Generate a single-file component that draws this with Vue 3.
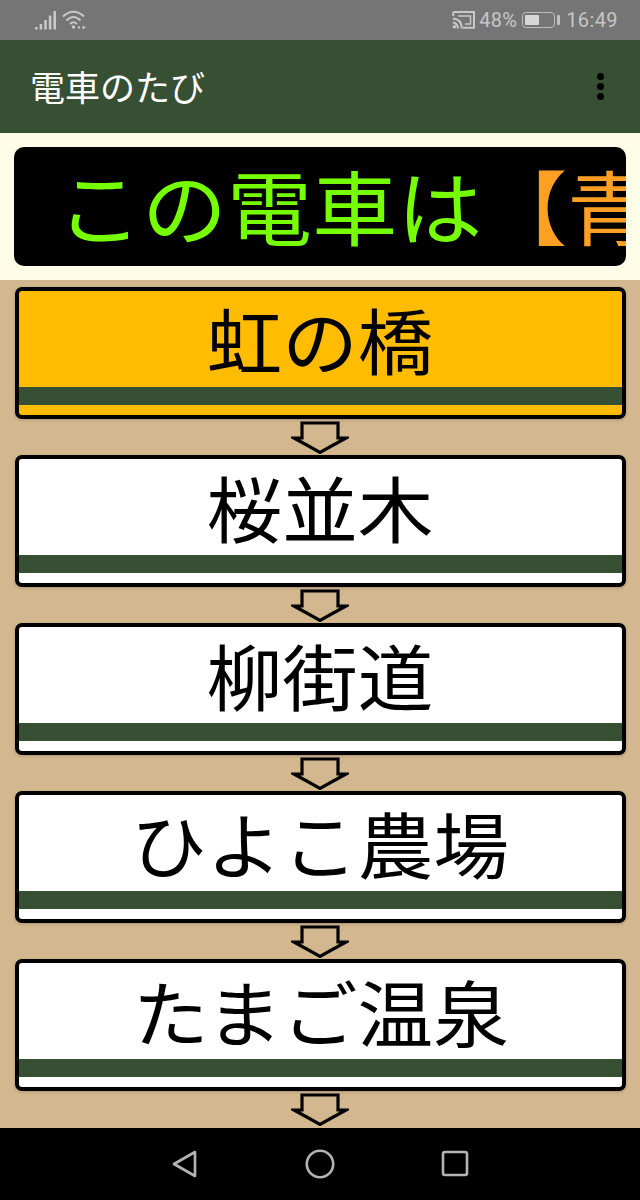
<script setup>
const stations = [
  { name: '虹の橋', current: true },
  { name: '桜並木' },
  { name: '柳街道' },
  { name: 'ひよこ農場' },
  { name: 'たまご温泉' }
]
</script>

<template>
  <div class="screen">
    <div class="status">
      <div class="status-left">
        <svg width="23" height="20" viewBox="0 0 23 20" class="sig">
          <rect x="1" y="17" width="2.6" height="2.5" />
          <rect x="5.6" y="14" width="2.6" height="5.5" />
          <rect x="10.2" y="10" width="2.6" height="9.5" />
          <rect x="14.8" y="5.5" width="2.6" height="14" />
          <rect x="19.4" y="1" width="2.6" height="18.5" />
        </svg>
        <svg width="25" height="20" viewBox="0 0 25 20" class="wifi">
          <path d="M1 6.5 Q11.5 -3 22 6.5" />
          <path d="M4.5 10.5 Q11.5 3.5 18.5 10.5" />
          <path d="M8 14 Q11.5 10.5 15 14" />
          <circle cx="11.5" cy="17" r="1.7" class="fill" />
          <circle cx="17" cy="17.5" r="1.2" class="fill" />
          <path d="M20.5 15.5 L24 17.5 L20.5 19.5 Z" class="fill" />
        </svg>
      </div>
      <div class="status-right">
        <svg width="23" height="18" viewBox="0 0 23 18" class="cast">
          <path d="M1.2 5 V2 Q1.2 1 2.5 1 H22 V16.8 H11" />
          <path d="M6 5 H18.5 V13 H13" class="thin" />
          <path d="M1 7.5 Q9.5 8 9.8 17.5" />
          <path d="M1 11.5 Q5.5 12 6 17.5" />
          <circle cx="2.4" cy="15.8" r="1.8" class="fill" />
        </svg>
        <span class="pct">48%</span>
        <div class="battery">
          <div class="battery-body"><div class="battery-fill"></div></div>
          <div class="battery-cap"></div>
        </div>
        <span class="time">16:49</span>
      </div>
    </div>

    <header class="appbar">
      <span class="title">電車のたび</span>
      <div class="menu"><i></i><i></i><i></i></div>
    </header>

    <section class="notice">
      <div class="board">
        <span class="board-text"><span class="green">この電車は</span><span class="orange">【青い空行き】</span></span>
      </div>
    </section>

    <main class="line">
      <template v-for="s in stations" :key="s.name">
        <div class="card" :class="{ current: s.current }">
          <div class="name"><span>{{ s.name }}</span></div>
          <div class="stripe"></div>
        </div>
        <svg class="arrow" width="58" height="34" viewBox="0 0 58 34">
          <path d="M11 2 H47 V17 H55 L29 31.5 L3 17 H11 Z" />
        </svg>
      </template>
    </main>

    <nav class="navbar">
      <svg width="28" height="30" viewBox="0 0 28 30">
        <path d="M24 3 V27 L3 15 Z" />
      </svg>
      <svg width="30" height="30" viewBox="0 0 30 30">
        <circle cx="15" cy="15" r="13.2" />
      </svg>
      <svg width="28" height="28" viewBox="0 0 28 28">
        <rect x="2" y="2" width="24" height="23" rx="2" />
      </svg>
    </nav>
  </div>
</template>

<style>
html, body { margin: 0; padding: 0; }
</style>

<style scoped>
.screen {
  width: 640px;
  height: 1200px;
  display: flex;
  flex-direction: column;
  overflow: hidden;
  font-family: "Noto Sans CJK JP", "Noto Sans", sans-serif;
}
.status {
  height: 40px;
  flex: none;
  background: #757575;
  display: flex;
  justify-content: space-between;
  align-items: center;
  padding: 0 22px 0 34px;
  color: #c6c6c6;
}
.status-left, .status-right { display: flex; align-items: center; }
.status-left { gap: 5px; }
.sig { fill: #c8c8c8; }
.wifi, .cast { fill: none; stroke: #c8c8c8; stroke-width: 2; }
.wifi .fill, .cast .fill { fill: #c8c8c8; stroke: none; }
.cast .thin { stroke-width: 1.5; }
.pct, .time {
  font-family: "Roboto", sans-serif;
  font-size: 20px;
  line-height: 40px;
}
.pct { margin-left: 4px; letter-spacing: .3px; }
.time { margin-left: 6.5px; letter-spacing: .4px; }
.battery { display: flex; align-items: center; margin-left: 5px; }
.battery-body {
  width: 33px;
  height: 16px;
  box-sizing: border-box;
  border: 1.5px solid #bdbdbd;
  border-radius: 4px;
  padding: 2px;
}
.battery-fill { width: 50%; height: 100%; background: #d6d6d6; border-radius: 1px; }
.battery-cap { width: 3px; height: 10px; background: #c0c0c0; margin-left: 1.5px; border-radius: 1px; }

.appbar {
  height: 93px;
  flex: none;
  background: #374f32;
  display: flex;
  justify-content: space-between;
  align-items: center;
  padding: 0 36px 0 30px;
}
.title {
  color: #fff;
  font-size: 35px;
  line-height: 1;
  margin-top: -2px;
}
.menu { display: flex; flex-direction: column; gap: 3px; margin-top: -1px; }
.menu i {
  display: block;
  width: 7px;
  height: 7px;
  border-radius: 50%;
  background: #000;
}

.notice {
  height: 147px;
  flex: none;
  background: #fffde7;
  box-sizing: border-box;
  padding: 14px;
}
.board {
  height: 119px;
  background: #000;
  border-radius: 10px;
  overflow: hidden;
  white-space: nowrap;
  display: flex;
  align-items: center;
  padding-left: 43px;
}
.board-text {
  font-size: 81px;
  line-height: 1;
  display: block;
  margin-top: -6px;
  transform: scaleX(1.05);
  transform-origin: left center;
}
.green { color: #76ff03; }
.orange { color: #ffa024; }

.line {
  flex: 1;
  min-height: 0;
  background: #d3b78f;
  overflow: hidden;
  display: flex;
  flex-direction: column;
  align-items: center;
  padding-top: 7px;
}
.card {
  width: 611px;
  height: 132px;
  flex: none;
  margin-left: 1px;
  box-sizing: border-box;
  border: 4.5px solid #000;
  border-radius: 7px;
  background: #fff;
  box-shadow: 0 1px 3px rgba(0, 0, 0, .2);
  display: flex;
  flex-direction: column;
}
.card.current { background: #ffbc00; }
.name {
  height: 95.5px;
  flex: none;
  line-height: 93px;
  text-align: center;
  color: #000;
  white-space: nowrap;
}
.name span {
  display: inline-block;
  font-size: 72px;
  transform: scaleX(1.05);
}
.stripe {
  height: 18.5px;
  flex: none;
  background: #374f32;
}
.arrow {
  flex: none;
  display: block;
  margin: 2px 0 0;
  height: 34px;
  fill: none;
  stroke: #000;
  stroke-width: 3.2;
}
.navbar {
  height: 72px;
  flex: none;
  background: #000;
  display: flex;
  align-items: center;
  justify-content: center;
  gap: 106px;
}
.navbar svg { fill: none; stroke: #b4b4b4; stroke-width: 2.6; stroke-linejoin: round; }
</style>
